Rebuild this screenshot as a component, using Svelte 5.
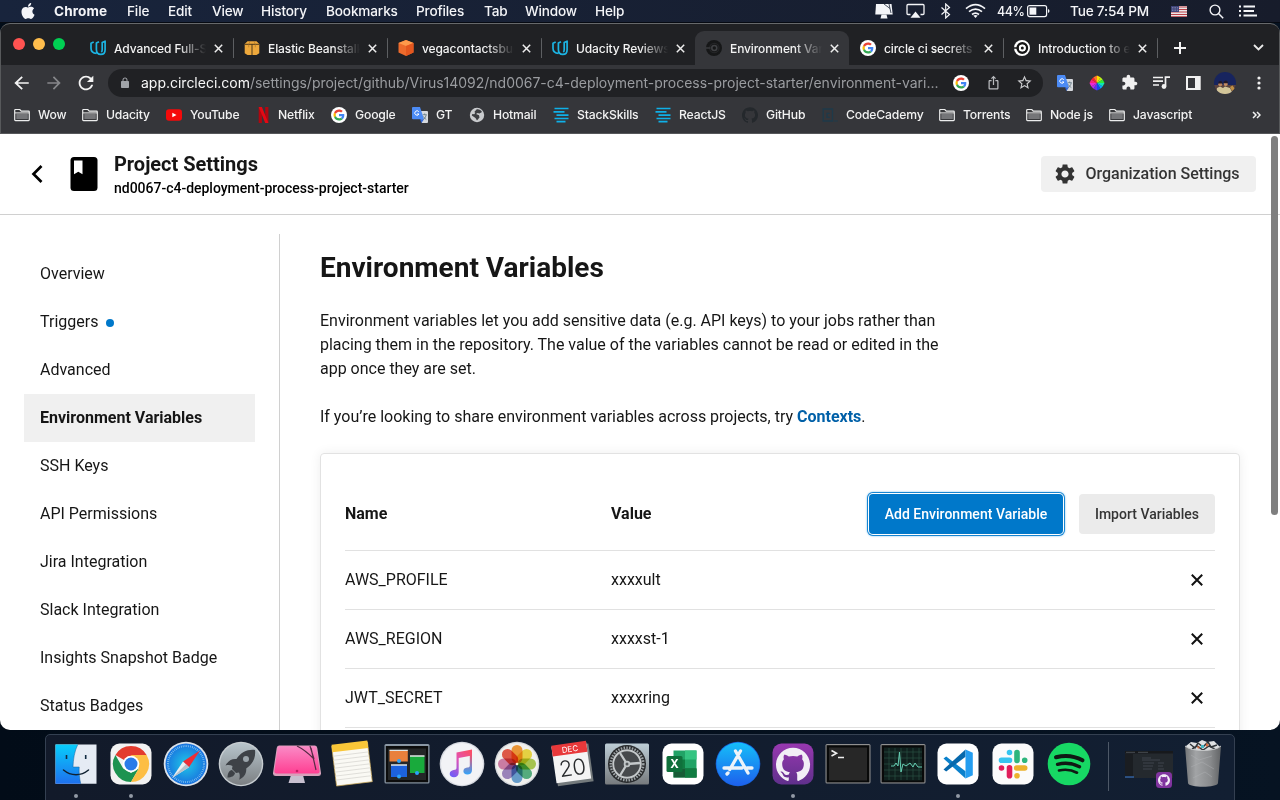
<script>
  const menus = ['File', 'Edit', 'View', 'History', 'Bookmarks', 'Profiles', 'Tab', 'Window', 'Help'];
  const tabs = [
    { icon: 'udacity', title: 'Advanced Full-Stack' },
    { icon: 'beanstalk', title: 'Elastic Beanstalk' },
    { icon: 'bucket', title: 'vegacontactsbucket' },
    { icon: 'udacity', title: 'Udacity Reviews' },
    { icon: 'circledark', title: 'Environment Variables', active: true },
    { icon: 'google', title: 'circle ci secrets' },
    { icon: 'circlelight', title: 'Introduction to env' }
  ];
  const bookmarks = [
    ['folder', 'Wow'], ['folder', 'Udacity'], ['youtube', 'YouTube'], ['netflix', 'Netflix'],
    ['google', 'Google'], ['translate', 'GT'], ['globe', 'Hotmail'], ['stack', 'StackSkills'],
    ['stack', 'ReactJS'], ['github', 'GitHub'], ['code', 'CodeCademy'], ['folder', 'Torrents'],
    ['folder', 'Node js'], ['folder', 'Javascript']
  ];
  const nav = ['Overview', 'Triggers', 'Advanced', 'Environment Variables', 'SSH Keys', 'API Permissions',
    'Jira Integration', 'Slack Integration', 'Insights Snapshot Badge', 'Status Badges'];
  const vars = [['AWS_PROFILE', 'xxxxult'], ['AWS_REGION', 'xxxxst-1'], ['JWT_SECRET', 'xxxxring']];
  const dock = ['finder', 'chrome', 'safari', 'rocket', 'cleaner', 'notes', 'mission', 'music', 'photos', 'calendar',
    'prefs', 'excel', 'appstore', 'github', 'terminal', 'activity', 'vscode', 'slack', 'spotify'];
  const running = ['finder', 'chrome', 'github', 'vscode'];
  const petals = ['#f7962a', '#f1dc38', '#a9cb45', '#4cb07c', '#5f9dd4', '#9b82c2', '#d37aa8', '#e94f3c'];
  const cat = 'M12 .297c-6.63 0-12 5.373-12 12 0 5.303 3.438 9.8 8.205 11.385.6.113.82-.258.82-.577 0-.285-.01-1.04-.015-2.04-3.338.724-4.042-1.61-4.042-1.61C4.422 18.07 3.633 17.7 3.633 17.7c-1.087-.744.084-.729.084-.729 1.205.084 1.838 1.236 1.838 1.236 1.07 1.835 2.809 1.305 3.495.998.108-.776.417-1.305.76-1.605-2.665-.3-5.466-1.332-5.466-5.93 0-1.31.465-2.38 1.235-3.22-.135-.303-.54-1.523.105-3.176 0 0 1.005-.322 3.3 1.23.96-.267 1.98-.399 3-.405 1.02.006 2.04.138 3 .405 2.28-1.552 3.285-1.23 3.285-1.23.645 1.653.24 2.873.12 3.176.765.84 1.23 1.91 1.23 3.22 0 4.61-2.805 5.625-5.475 5.92.42.36.81 1.096.81 2.22 0 1.606-.015 2.896-.015 3.286 0 .315.21.69.825.57C20.565 22.092 24 17.592 24 12.297c0-6.627-5.373-12-12-12';
</script>

{#snippet small(name)}
  <svg class="fav" viewBox="0 0 16 16" width="16" height="16">
    {#if name === 'udacity'}
      <path d="M3.700 2L1 3.300v4.900c0 3.100 2 5 5.500 5.100M9 1.700L6.400 3v6.500c0 3 1.700 4.900 4.400 4.900s4.300-1.900 4.300-4.700V1.200l-2.900 1.400v7.200c0 1-.3 1.700-.9 2.200" fill="none" stroke="#1cb4e3" stroke-width="1.700" stroke-linejoin="round" />
    {:else if name === 'beanstalk'}
      <path d="M3.500 1.300h9L15.300 4v9.300L12.500 15H8.300v-.1H7.700V15H3.500L.7 13.300V4z" fill="#eda83c" /><path d="M.9 4.300h14.200M8 4.300V15" stroke="#3b2c16" stroke-width=".9" /><path d="M6 1.300L4.700 4.300v3M10 1.300l1.300 3v3" fill="none" stroke="#a97326" stroke-width=".6" />
    {:else if name === 'bucket'}
      <path d="M8 0l7.500 3v9.500L8 16 .5 12.500V3z" fill="#ed6b2c" /><path d="M.5 3L8 0l7.500 3L8 6z" fill="#ff9a4b" /><path d="M8 6l7.500-3v9.500L8 16z" fill="#e4571f" />
    {:else if name === 'circledark' || name === 'circlelight'}
      {@const dark = name === 'circledark'}
      <circle cx="8" cy="8" r="8" fill={dark ? '#161718' : '#fff'} />
      <circle cx="8.300" cy="8" r="4.700" stroke-width={dark ? 1.300 : 2.400} fill="none" stroke={dark ? '#242527' : '#161616'} />
      <path d="M0 8h4.500" stroke={dark ? '#3a3b3e' : '#161616'} stroke-width="1.600" />
      <circle cx="8.300" cy="8" r="2.500" fill="none" stroke={dark ? '#3f4043' : '#fff'} stroke-width="1.600" />
      {#if !dark}<circle cx="8.300" cy="8" r="1.500" fill="#161616" />{/if}
    {:else if name === 'google'}
      <circle cx="8" cy="8" r="8" fill="#fff" />
      <g transform="translate(2.500 2.500) scale(.23)">
        <path fill="#ea4335" d="M24 9.500c3.540 0 6.710 1.220 9.210 3.600l6.850-6.850C35.900 2.380 30.470 0 24 0 14.620 0 6.510 5.380 2.560 13.220l7.980 6.190C12.430 13.720 17.740 9.500 24 9.500z" />
        <path fill="#4285f4" d="M46.980 24.550c0-1.570-.15-3.090-.38-4.550H24v9.020h12.940c-.58 2.960-2.260 5.480-4.780 7.180l7.730 6c4.510-4.180 7.090-10.360 7.090-17.650z" />
        <path fill="#fbbc05" d="M10.530 28.590c-.48-1.450-.76-2.990-.76-4.590s.27-3.140.76-4.590l-7.980-6.190C.92 16.460 0 20.120 0 24c0 3.880.92 7.540 2.560 10.780z" />
        <path fill="#34a853" d="M24 48c6.480 0 11.930-2.130 15.890-5.810l-7.730-6c-2.150 1.450-4.920 2.300-8.160 2.300-6.260 0-11.570-4.220-13.470-9.910l-7.980 6.190C6.510 42.620 14.620 48 24 48z" />
      </g>
    {:else if name === 'folder'}
      <path d="M.7 12.800V3.300a.8.800 0 0 1 .8-.8h4.300l1.500 1.700h7.200a.8.800 0 0 1 .8.800v7.800a.8.800 0 0 1-.8.800h-13a.8.800 0 0 1-.8-.8z" fill="#36373a" stroke="#eceded" stroke-width="1.200" />
      <path d="M2.300 6.700h11.500V12H2.300z" fill="#747578" /><path d="M1 5.900h14" stroke="#eceded" />
    {:else if name === 'youtube'}
      <rect y="2.300" width="16" height="11.400" rx="3" fill="#f50a0a" /><path d="M6.300 5.700v4.600l4.200-2.300z" fill="#fff" />
    {:else if name === 'netflix'}
      <path d="M2.700 0h3.200v16H2.700zM9.200 0h3.200v16H9.200z" fill="#b10710" /><path d="M2.700 0h3.200l6.500 16H9.200z" fill="#e50914" />
    {:else if name === 'translate'}
      <path d="M6 4h9q1 0 1 1v10q0 1-1 1h-5z" fill="#d6d9de" /><path d="M1 0h7l4 12.300H1q-1 0-1-1V1q0-1 1-1z" fill="#4c8bf5" /><path d="M8 12.300h4L9.500 16z" fill="#3266d5" />
      <path d="M6.800 4.700A2.200 2.200 0 1 0 7 7H5" fill="none" stroke="#fff" stroke-width="1" /><path d="M10.800 7.700h4M12.700 6.500v1.300M14.200 8c-.5 2-1.300 3.300-2.600 4.500M11.500 9.500c.8 1.500 1.600 2.300 2.800 3" stroke="#5f7680" stroke-width=".8" fill="none" />
    {:else if name === 'globe'}
      <circle cx="8" cy="8" r="7.200" fill="#c9cbce" /><path d="M7.500 2.500c2-.5 4.500.5 5.500 2.500l-2.500 1.500-2-.5-1.500 1 3 1.300.5 2.200-2.500 3-1.500-2.500L2.800 8.500l.5-1.500 2 .3 1-1.500-1-.8z" fill="#3c3e42" />
    {:else if name === 'stack'}
      <path d="M1.500 1.500h14M.5 4.900h11M3.500 8.200h12M1.500 11.500h14M3.500 14.600h9" stroke="#0fb0e8" stroke-width="1.700" />
    {:else if name === 'github'}
      <path d={cat} fill="#24282c" transform="scale(.667)" />
    {:else if name === 'code'}
      <path d="M1.200 2h9.300v12H1.200z" fill="none" stroke="#1e3a4a" stroke-width="1.300" /><path d="M7.700 6.300H5v4h2.700M11.800 14h4" fill="none" stroke="#1e3a4a" stroke-width="1.200" />
    {/if}
  </svg>
{/snippet}

{#snippet app(name)}
  <svg class="app" viewBox="0 0 48 48" width="48" height="48">
    {#if name === 'finder'}
      <defs><linearGradient id="fi" x2="0" y2="1"><stop stop-color="#08cdfb" /><stop offset="1" stop-color="#1e70ee" /></linearGradient></defs>
      <path d="M3.500 4.500h41v39.300h-41z" fill="#e5ebf4" /><path d="M3.500 4.500h22.300c-3.500 7-4.500 15-4.800 22.500h6.200c-.3 5.600.3 11 1.500 16.800H3.500z" fill="url(#fi)" />
      <path d="M14.500 15v4M33.700 15v4" stroke="#112a42" stroke-width="1.600" /><path d="M11.500 30c7.500 6.300 17.500 6.300 25 0" stroke="#102131" stroke-width="1.500" fill="none" stroke-linecap="round" /><path d="M25.800 4.500c-3.500 7-4.500 15-4.800 22.500h6.200c-.3 5.600.3 11 1.500 16.800" stroke="#17629b" fill="none" stroke-width=".5" />
    {:else if name === 'chrome'}
      <rect x="3.500" y="3.500" width="41" height="41" rx="9" fill="#f2f2f2" />
      <path d="M24 24L8.400 15A18 18 0 0 1 39.600 15z" fill="#e33b2e" /><path d="M24 42A18 18 0 0 1 8.400 15l7.800 13.500L24 33l7.800-4.500z" fill="#1d9350" />
      <path d="M24 42l7.800-13.500L24 15h15.600A18 18 0 0 1 24 42z" fill="#fdbe44" />
      <circle cx="24" cy="24" r="8.300" fill="#fff" /><circle cx="24" cy="24" r="6.500" fill="#2a7be9" />
    {:else if name === 'safari'}
      <defs><radialGradient id="sf"><stop stop-color="#20c8e7" /><stop offset="1" stop-color="#1973df" /></radialGradient></defs>
      <circle cx="24" cy="24" r="22.300" fill="#dce2e8" /><circle cx="24" cy="24" r="20.500" fill="url(#sf)" /><circle cx="24" cy="24" r="18" fill="none" stroke="#9fd5f5" stroke-width="2" stroke-dasharray=".6 1.285" />
      <path d="M38 10.500L21 21.500l6 5.700z" fill="#ee2d36" /><path d="M10 38l11-16.500 6 5.700z" fill="#eceff2" /><path d="M10 38l17-10.800-3-3z" fill="#b9c2cb" />
    {:else if name === 'rocket'}
      <defs><linearGradient id="rk" x2="0" y2="1"><stop stop-color="#b8c5cc" /><stop offset="1" stop-color="#7c8083" /></linearGradient></defs>
      <circle cx="24" cy="24" r="22.300" fill="#c6ccd0" /><circle cx="24" cy="24" r="20.900" fill="url(#rk)" />
      <path d="M38 10c-7-1-14 2-18.500 9-5-.5-8.500 2-11 6.500 3-.7 5-.5 7 .5l-.5 3 4 4 3-.5c1 2 1 4.500.2 7.200 5-2.500 7.500-6.200 7-11.200C36 24 39 17 38 10z" fill="#3e4247" /><path d="M15 30c-3 .5-4.500 3.500-4.500 7.500 4 0 7-1.500 7.500-4.500z" fill="#3e4247" /><circle cx="29" cy="19" r="3" fill="#9ba4aa" />
    {:else if name === 'cleaner'}
      <defs><linearGradient id="cl" x2="0" y2="1"><stop stop-color="#fa8ac6" /><stop offset="1" stop-color="#ff3f92" /></linearGradient></defs>
      <path d="M18 35h12l2 8H15.500z" fill="#c8c0cf" /><path d="M6 5.500h36q2 0 2.300 2.500l3.700 25q.2 3-2.700 3H2.700q-2.900 0-2.700-3L3.700 8Q4 5.500 6 5.500z" fill="#d7a0ba" /><path d="M6.500 6.300h35q1.600 0 1.900 1.900l3.200 22.800q.2 2.500-2 2.500H3.400q-2.200 0-2-2.500L4.600 8.200q.3-1.900 1.900-1.900z" fill="url(#cl)" /><path d="M24 6c6 3 11 7 16 12M38 8l5 22M37 6l4 13" stroke="#562b45" stroke-width="1.200" fill="none" /><circle cx="24" cy="31" r="1.300" fill="#c21f65" />
    {:else if name === 'notes'}
      <g transform="rotate(-7 24 24)"><path d="M6 4h36v40H6z" fill="#faf9f4" stroke="#c9a552" stroke-width=".7" /><path d="M6 2.500h36V10H6z" fill="#f9c638" /><path d="M6 14h36M6 18h36M6 22h36M6 26h36M6 30h36M6 34h36M6 38h36" stroke="#dad9d4" stroke-width=".8" /></g>
    {:else if name === 'mission'}
      <rect x="1.500" y="4" width="45" height="39.500" rx="1.500" fill="#8a97a4" /><rect x="2.800" y="6" width="42.400" height="36.300" fill="#0c0c0c" /><path d="M5 8.500h38V40H5z" fill="#242627" />
      <path d="M6.500 10.500h18.300v11H6.500z" fill="#e9803c" /><path d="M8 25h16v12H8z" fill="#1d62dd" /><path d="M27 16h14.500v17H27z" fill="#19aa3c" /><path d="M6.500 10.300h18.300M8 25h16M27 16h14.500" stroke="#e0e5e4" stroke-width="1.300" /><circle cx="16" cy="21" r="2" fill="#2ba3fb" /><circle cx="34" cy="33" r="2" fill="#2ba3fb" /><circle cx="16" cy="36.500" r="2" fill="#2ba3fb" />
    {:else if name === 'music'}
      <defs><linearGradient id="mu" x1=".8" x2=".2" y2="1"><stop stop-color="#fb4d68" /><stop offset=".45" stop-color="#e052b5" /><stop offset="1" stop-color="#735cf5" /></linearGradient><linearGradient id="mv" x2="0" y2="1"><stop stop-color="#fb4d68" /><stop offset="1" stop-color="#30a5fb" /></linearGradient></defs>
      <circle cx="24" cy="24" r="22.300" fill="#d5d8df" /><circle cx="24" cy="24" r="21" fill="#f2f3f6" />
      <path d="M18.500 12.500L34 9.500v6L20.700 18v14.500c0 3-2 4.700-4.700 4.700s-4.300-1.400-4.300-3.300c0-2.300 1.800-3.600 4-3.900 2-.2 2.800-.5 2.800-2.500z" fill="url(#mu)" /><path d="M31.800 14H34v16c0 3-2 4.600-4.600 4.600s-4-1.400-4-3.300c0-2.300 1.600-3.400 3.700-3.700 1.900-.2 2.700-.6 2.700-2.200z" fill="url(#mv)" />
    {:else if name === 'photos'}
      <circle cx="24" cy="24" r="22.300" fill="#d3d6da" /><circle cx="24" cy="24" r="21" fill="#f1f0ed" />
      {#each petals as p, i}<rect class="petal" x="18.500" y="5" width="11" height="18.500" rx="5.500" fill={p} transform={`rotate(${i * 45} 24 24)`} />{/each}
      <circle cx="24" cy="24" r="1.300" fill="#fff4d0" />
    {:else if name === 'calendar'}
      <g transform="rotate(-8 24 24)"><path d="M7 6h36v38H7z" fill="#747a7c" /><path d="M6 4h35v37H6z" fill="#f4f4f4" /><path d="M6 3h35v11H6z" fill="#e8383a" /><text x="24" y="11.700" text-anchor="middle" font-size="8" fill="#fff" font-family="Inter, sans-serif">DEC</text><text x="24" y="35.500" text-anchor="middle" font-size="22" font-weight="300" fill="#292b2d" font-family="Inter, sans-serif">20</text></g>
    {:else if name === 'prefs'}
      <defs><linearGradient id="pr" x2="0" y2="1"><stop stop-color="#bdcdd6" /><stop offset="1" stop-color="#777b7e" /></linearGradient></defs>
      <rect x="2" y="3.500" width="44" height="41" rx="1.500" fill="url(#pr)" /><circle cx="24" cy="24" r="19" fill="#292b2d" /><circle cx="24" cy="24" r="16.300" fill="none" stroke="#9da3a6" stroke-width="2.500" stroke-dasharray="1.500 1.300" /><circle cx="24" cy="24" r="13.800" fill="#46494c" stroke="#c4c8ca" stroke-width="1.900" /><path d="M24 24l13-1M24 24l-7-11M24 24l-7 11.500" stroke="#c4c8ca" stroke-width="2.300" /><circle cx="24" cy="24" r="3.300" fill="#bfc4c6" /><circle cx="24" cy="24" r="1.500" fill="#54585b" />
    {:else if name === 'excel'}
      <rect x="3.500" y="3.500" width="41" height="41" rx="9" fill="#fff" /><path d="M14.500 10.500h23v27h-23z" fill="#21a366" /><path d="M26 10.500h11.500v9H26z" fill="#35c481" /><path d="M14.500 19.500H26v9H14.500z" fill="#107c41" /><path d="M14.500 28.500h23v9h-23z" fill="#185c37" /><path d="M26 28.500h11.500v9H26z" fill="#107c41" /><rect x="7.500" y="16" width="16" height="16" rx="1.500" fill="#0f703b" /><text x="15.500" y="28.200" text-anchor="middle" font-size="11.500" font-weight="700" fill="#fff" font-family="Inter, sans-serif">X</text>
    {:else if name === 'appstore'}
      <defs><linearGradient id="as" x2="0" y2="1"><stop stop-color="#15bff9" /><stop offset="1" stop-color="#1d60ed" /></linearGradient></defs>
      <circle cx="24" cy="24" r="22.300" fill="#1763dd" /><circle cx="24" cy="24" r="21.500" fill="url(#as)" /><g stroke="#edf3f9" stroke-width="3.300" stroke-linecap="round"><path d="M21.500 11l12.500 22M26.500 11L15.800 29.500M10 28h18M33 28h5M14 33l-1 1" /></g>
    {:else if name === 'github'}
      <defs><linearGradient id="gh" x2="0" y2="1"><stop stop-color="#9838b0" /><stop offset="1" stop-color="#60308c" /></linearGradient></defs>
      <rect x="3.500" y="3.500" width="41" height="41" rx="9" fill="url(#gh)" /><path d={cat} fill="#f2eef6" transform="translate(7 7.300) scale(1.420)" />
    {:else if name === 'terminal' || name === 'activity'}
      <rect x="1.500" y="4" width="45" height="39.500" rx="1.500" fill="#909090" /><rect x="2.600" y="5.200" width="42.800" height="37.200" fill="#080909" />
      {#if name === 'terminal'}<path d="M5 7.500h38v33H5z" fill="#272727" /><path d="M7.500 10.500l5 2.800-5 2.700M14 17.500h6" stroke="#eee" stroke-width="1.600" fill="none" />
      {:else}<path d="M5 7.500h38v33H5z" fill="#10201e" /><path d="M10 8v32M16 8v32M22 8v32M28 8v32M34 8v32M40 8v32M5 12h38M5 18h38M5 24h38M5 30h38M5 36h38" stroke="#285044" stroke-width=".7" /><path d="M12 26h3l2-3 2 3 1.500-14 1.500 20 2-8 3 2 4-3 3 4 2-4 3 4h4" fill="none" stroke="#65ceb3" stroke-width="1" />{/if}
    {:else if name === 'vscode'}
      <rect x="3.500" y="3.500" width="41" height="41" rx="9" fill="#fff" /><path d="M9.500 18.500l2.700-2 19.300 14.800v7.200z" fill="#0b81cc" /><path d="M9.500 29.500l2.700 2 19.300-14.800V9.500z" fill="#0668ac" /><path d="M31.500 9.500l7.300 3.300v22.400l-7.300 3.300z" fill="#249df0" />
    {:else if name === 'slack'}
      <rect x="3.500" y="3.500" width="41" height="41" rx="9" fill="#fbfbfb" /><g stroke-width="5.600" stroke-linecap="round"><path d="M20.500 12.500v0M12.500 20.300h8" stroke="#36c5f0" /><path d="M28 12.500v8M35.700 20.300v0" stroke="#2eb67d" /><path d="M35.700 28h-8M28 35.700v0" stroke="#ecb22e" /><path d="M20.500 35.700v-8M12.500 28v0" stroke="#e01e5a" /></g>
    {:else if name === 'spotify'}
      <circle cx="24" cy="24" r="21.300" fill="#17d864" /><g fill="none" stroke="#101914" stroke-linecap="round"><path d="M11 17.300c9-2.500 18-1.700 26.500 3" stroke-width="4" /><path d="M12.500 24.300c8-2 15-1.200 22 2.500" stroke-width="3.300" /><path d="M14 30.500c6.500-1.500 12.500-.8 18 2.200" stroke-width="2.700" /></g>
    {/if}
  </svg>
{/snippet}

<div class="desktop">
  <header class="menubar">
    <svg class="apple" width="16" height="16" viewBox="0 0 24 24"><path fill="#f4f5f8" d="M12.152 6.896c-.948 0-2.415-1.078-3.960-1.040-2.040.027-3.910 1.183-4.961 3.014-2.117 3.675-.546 9.103 1.519 12.090 1.013 1.454 2.208 3.090 3.792 3.039 1.520-.065 2.090-.987 3.935-.987 1.831 0 2.350.987 3.960.948 1.637-.026 2.676-1.480 3.676-2.948 1.156-1.688 1.636-3.325 1.662-3.415-.039-.013-3.182-1.221-3.220-4.857-.026-3.040 2.480-4.494 2.597-4.559-1.429-2.090-3.623-2.324-4.390-2.376-2-.156-3.675 1.090-4.610 1.090zM15.530 3.830c.843-1.012 1.400-2.427 1.245-3.830-1.207.052-2.662.805-3.532 1.818-.78.896-1.454 2.338-1.273 3.714 1.338.104 2.715-.688 3.559-1.701" /></svg>
    <b>Chrome</b>
    {#each menus as m}<span>{m}</span>{/each}
    <div class="status">
      <svg width="18" height="16" viewBox="0 0 18 16"><path d="M1 1h15.500l1.200 10.500H.3z" fill="#f4f5f8" /><path d="M6.500 11.500h5l1 4h-7z" fill="#f4f5f8" /><path d="M9 1l6 4.500M14 1l2 9" stroke="#1b2436" stroke-width=".8" /></svg>
      <svg width="19" height="16" viewBox="0 0 19 16"><path d="M4.500 11.500H2q-1 0-1-1v-8q0-1 1-1h15q1 0 1 1v8q0 1-1 1h-2.500" fill="none" stroke="#f4f5f8" stroke-width="1.300" /><path d="M9.500 8.500l5 6.200h-10z" fill="#f4f5f8" /></svg>
      <svg width="12" height="16" viewBox="0 0 12 16"><path d="M1.500 4.500l8 7L5.700 15V1l3.800 3.500-8 7" fill="none" stroke="#f4f5f8" stroke-width="1.200" /></svg>
      <svg width="21" height="16" viewBox="0 0 21 16"><g fill="none" stroke="#f4f5f8" stroke-width="1.700"><path d="M1 5.600q9.500-8 19 0M4 8.700q6.500-5.300 13 0M7 11.500q3.500-2.700 7 0" /></g><path d="M8.300 12.600q2.200-1.400 4.400 0l-2.200 2.400z" fill="#f4f5f8" /></svg>
      <span class="pct">44%</span>
      <svg width="23" height="14" viewBox="0 0 23 14"><rect x=".6" y="1.600" width="19" height="11" rx="2" fill="none" stroke="#f4f5f8" stroke-width="1.200" /><path d="M2.500 3.500h6.800v7.200H2.500z" fill="#f4f5f8" /><path d="M21 5v4q1.500-.5 1.500-2T21 5" fill="#f4f5f8" /></svg>
      <span class="clock">Tue 7:54 PM</span>
      <svg class="flag" width="16" height="11" viewBox="0 0 16 11"><path d="M0 0h16v11H0z" fill="#ece7e8" /><path d="M0 1h16M0 3.500h16M0 6h16M0 8.500h16M0 10.700h16" stroke="#ba4149" /><path d="M0 0h8v6H0z" fill="#3e4379" /><path d="M1 1.500h6M1 3h6M1 4.500h6" stroke="#c6c8dc" stroke-width=".6" stroke-dasharray=".7 1" /></svg>
      <svg width="15" height="15" viewBox="0 0 15 15"><circle cx="6" cy="6" r="4.900" fill="none" stroke="#f4f5f8" stroke-width="1.400" /><path d="M9.500 9.500l4.700 4.700" stroke="#f4f5f8" stroke-width="1.500" /></svg>
      <svg width="18" height="12" viewBox="0 0 18 12"><path d="M0 1.500h2M4.500 1.500H16M0 6h2M4.500 6H15M0 10.500h2M4.500 10.500H18" stroke="#f4f5f8" stroke-width="1.800" /></svg>
    </div>
  </header>

  <main class="window">
    <div class="tabstrip">
      <div class="lights"><i></i><i></i><i></i></div>
      {#each tabs as t, i}
        <div class="tab" class:active={t.active} class:sep={i !== 3 && i !== 4}>
          {@render small(t.icon)}<span>{t.title}</span>
          <svg width="9" height="9" viewBox="0 0 9 9"><path d="M.8.8l7.400 7.400M8.200.8L.8 8.200" stroke="#eee" stroke-width="1.500" /></svg>
        </div>
      {/each}
      <svg class="plus" width="12" height="12" viewBox="0 0 12 12"><path d="M6 0v12M0 6h12" stroke="#f3f3f3" stroke-width="2" /></svg>
      <svg class="chev" width="11" height="7" viewBox="0 0 11 7"><path d="M1 1l4.500 4.500L10 1" fill="none" stroke="#eaeaea" stroke-width="1.800" /></svg>
    </div>

    <div class="toolbar">
      <svg width="20" height="20" viewBox="0 0 24 24"><path fill="#f3f3f3" d="M20 11H7.830l5.590-5.590L12 4l-8 8 8 8 1.410-1.410L7.830 13H20z" transform="translate(-1.500 0) scale(1.080 1) " /></svg>
      <svg width="20" height="20" viewBox="0 0 24 24"><path fill="#86878a" d="M4 11h12.170l-5.590-5.590L12 4l8 8-8 8-1.410-1.410L16.170 13H4z" /></svg>
      <svg width="22" height="22" viewBox="0 0 24 24"><path fill="#f3f3f3" d="M17.650 6.350C16.200 4.900 14.210 4 12 4c-4.420 0-7.990 3.580-7.990 8s3.570 8 7.990 8c3.730 0 6.840-2.550 7.730-6h-2.080c-.82 2.330-3.040 4-5.650 4-3.310 0-6-2.690-6-6s2.690-6 6-6c1.660 0 3.140.69 4.220 1.780L13 11h7V4z" /></svg>
      <div class="omni">
        <svg width="12" height="12" viewBox="0 0 24 24"><path fill="#a0a3a8" d="M18 8h-1V6c0-2.760-2.240-5-5-5S7 3.240 7 6v2H6c-1.100 0-2 .9-2 2v10c0 1.100.9 2 2 2h12c1.100 0 2-.9 2-2V10c0-1.100-.9-2-2-2zM9 8V6c0-1.660 1.340-3 3-3s3 1.340 3 3v2z" /></svg>
        <p><b>app.circleci.com</b>/settings/project/github/Virus14092/nd0067-c4-deployment-process-project-starter/environment-vari...</p>
        {@render small('google')}
        <svg width="15" height="15" viewBox="0 0 24 24"><path fill="#b9bbbe" d="M16 5l-1.420 1.420-1.590-1.590V16h-1.980V4.830L9.420 6.420 8 5l4-4 4 4zm4 5v11c0 1.100-.9 2-2 2H6c-1.110 0-2-.9-2-2V10c0-1.110.89-2 2-2h3v2H6v11h12V10h-3V8h3c1.100 0 2 .89 2 2z" /></svg>
        <svg width="17" height="17" viewBox="0 0 24 24"><path fill="#c9cacc" d="M22 9.240l-7.190-.62L12 2 9.190 8.630 2 9.240l5.460 4.730L5.820 21 12 17.270 18.180 21l-1.630-7.030zM12 15.400l-3.760 2.270 1-4.280-3.320-2.880 4.380-.38L12 6.100l1.710 4.040 4.380.38-3.320 2.880 1 4.280z" /></svg>
      </div>
      <div class="exts">
        {@render small('translate')}
        <svg width="16" height="16" viewBox="0 0 16 16"><path d="M8 8V.5l3.500 1.800z" fill="#fddf00" /><path d="M8 8l3.500-5.700 2.200 2.200z" fill="#b6f61b" /><path d="M8 8l5.700-3.500L15.500 8z" fill="#2deb3c" /><path d="M8 8h7.500l-1.800 3.500z" fill="#10e4b9" /><path d="M8 8l5.700 3.500-2.200 2.200z" fill="#08a6f5" /><path d="M8 8l3.500 5.700L8 15.500z" fill="#1748ec" /><path d="M8 8v7.500l-3.500-1.800z" fill="#6431ee" /><path d="M8 8l-3.500 5.700-2.200-2.200z" fill="#b22eec" /><path d="M8 8l-5.700 3.500L.5 8z" fill="#ee28d4" /><path d="M8 8H.5l1.800-3.500z" fill="#fa247e" /><path d="M8 8L2.300 4.500l2.200-2.200z" fill="#fc2131" /><path d="M8 8L4.500 2.300 8 .5z" fill="#fb762b" /></svg>
        <svg width="17" height="17" viewBox="0 0 24 24"><path fill="#f1f1f1" d="M20.500 11H19V7c0-1.100-.9-2-2-2h-4V3.500C13 2.120 11.880 1 10.500 1S8 2.120 8 3.500V5H4c-1.100 0-1.990.9-1.990 2v3.800H3.500c1.490 0 2.700 1.210 2.700 2.700s-1.210 2.700-2.700 2.700H2V20c0 1.100.9 2 2 2h3.800v-1.500c0-1.490 1.210-2.700 2.700-2.700s2.700 1.210 2.700 2.700V22H17c1.100 0 2-.9 2-2v-4h1.500c1.380 0 2.500-1.120 2.500-2.500S21.880 11 20.500 11z" /></svg>
        <svg width="17" height="15" viewBox="0 0 17 15"><path d="M0 2.500h10M0 6.200h10M0 10h6M12.500 11V2.200H17" fill="none" stroke="#f1f1f1" stroke-width="1.700" /><circle cx="11" cy="11.500" r="2.400" fill="#f1f1f1" /></svg>
        <svg width="15" height="14" viewBox="0 0 15 14"><path d="M1 1h12.700v12H1z" fill="none" stroke="#f1f1f1" stroke-width="2" /><path d="M9 1h5v12H9z" fill="#f1f1f1" /></svg>
        <svg width="22" height="22" viewBox="0 0 22 22"><defs><clipPath id="av"><circle cx="11" cy="11" r="11" /></clipPath></defs><g clip-path="url(#av)"><path d="M0 0h22v22H0z" fill="#17245e" /><path d="M0 13h22v9H0z" fill="#59423d" /><path d="M2 22l1-6 3-1.500 3 1.500 2-1.500 5 1.500 3 6z" fill="#d2c599" /><circle cx="6.300" cy="12.300" r="2" fill="#b8825d" /><circle cx="11.700" cy="12" r="2.100" fill="#c58c65" /><path d="M4.200 11.500c0-3.300 4.300-3.300 4.300 0M9.500 11.200c0-3.500 4.500-3.500 4.500 0" fill="#211827" /><path d="M16 15l2.500-1.500L21 17l-3 2z" fill="#c19044" /></g></svg>
        <svg width="4" height="14" viewBox="0 0 4 14"><g fill="#f1f1f1"><circle cx="2" cy="2" r="1.600" /><circle cx="2" cy="7" r="1.600" /><circle cx="2" cy="12" r="1.600" /></g></svg>
      </div>
    </div>

    <div class="bookmarks">
      {#each bookmarks as [icon, label]}<div>{@render small(icon)}<span>{label}</span></div>{/each}
      <svg width="9" height="8" viewBox="0 0 9 8"><path d="M1 1l3 3-3 3M5 1l3 3-3 3" fill="none" stroke="#f1f1f1" stroke-width="1.500" /></svg>
    </div>

    <div class="page">
      <header class="phead">
        <svg width="12" height="20" viewBox="0 0 12 20"><path d="M10.500 2L2.500 10l8 8" fill="none" stroke="#000" stroke-width="2.700" /></svg>
        <svg class="book" width="28" height="34" viewBox="0 0 28 34"><rect x=".5" width="27" height="34" rx="3.500" fill="#000" /><path d="M4 3.500h8.500v13.700l-4.200-2.500L4 17.200z" fill="#fff" /></svg>
        <div class="titles"><h2>Project Settings</h2><p>nd0067-c4-deployment-process-project-starter</p></div>
        <button class="org"><svg width="24" height="24" viewBox="0 0 24 24"><path fill="#333" d="M19.140 12.940c.04-.3.060-.61.060-.94 0-.32-.02-.64-.07-.94l2.030-1.580c.18-.14.230-.41.120-.61l-1.920-3.320c-.12-.22-.37-.29-.59-.22l-2.390.96c-.5-.38-1.030-.7-1.620-.94l-.36-2.540c-.04-.24-.24-.41-.48-.41h-3.840c-.24 0-.43.170-.47.410l-.36 2.540c-.59.240-1.130.570-1.620.940l-2.390-.96c-.22-.08-.47 0-.59.220L2.740 8.870c-.12.210-.08.470.120.610l2.030 1.580c-.05.300-.09.630-.09.940s.02.640.07.940l-2.030 1.580c-.18.140-.23.410-.12.610l1.920 3.320c.12.220.370.290.590.220l2.390-.96c.5.380 1.030.700 1.620.940l.36 2.540c.05.240.240.410.480.410h3.840c.24 0 .440-.17.470-.41l.36-2.540c.59-.24 1.130-.56 1.620-.94l2.390.96c.22.080.470 0 .590-.22l1.920-3.320c.12-.22.070-.47-.12-.61zM12 15.600c-1.980 0-3.600-1.620-3.600-3.600s1.620-3.600 3.600-3.600 3.600 1.620 3.600 3.600-1.620 3.600-3.600 3.600z" /></svg><span>Organization Settings</span></button>
      </header>
      <div class="cols">
        <nav>
          {#each nav as n, i}<div class:sel={i === 3}><span>{n}</span>{#if i === 1}<i></i>{/if}</div>{/each}
        </nav>
        <section>
          <h1>Environment Variables</h1>
          <p>Environment variables let you add sensitive data (e.g. API keys) to your jobs rather than<br />placing them in the repository. The value of the variables cannot be read or edited in the<br />app once they are set.</p>
          <p class="share">If you’re looking to share environment variables across projects, try <a href="#contexts">Contexts</a>.</p>
          <div class="card">
            <div class="row head"><b>Name</b><b>Value</b><div class="actions"><button class="add">Add Environment Variable</button><button class="imp">Import Variables</button></div></div>
            {#each vars as [k, v]}
              <div class="row"><span>{k}</span><span>{v}</span><svg width="12" height="12" viewBox="0 0 12 12"><path d="M.8.8l10.400 10.400M11.200.8L.8 11.200" stroke="#111" stroke-width="2" /></svg></div>
            {/each}
          </div>
        </section>
      </div>
      <div class="scroll"></div>
    </div>
  </main>

  <footer class="dock">
    {#each dock as d}<div class="slot">{@render app(d)}{#if running.includes(d)}<i></i>{/if}</div>{/each}
    <span class="line"></span>
    <svg class="thumb" width="48" height="37" viewBox="0 0 48 37"><path d="M0 0h48v27H0z" fill="#24292e" /><path d="M0 0h48v2.500H0z" fill="#17191c" /><path d="M1 1.300h9M13 1.300h10" stroke="#697078" stroke-width=".6" /><path d="M0 3h8v23H0z" fill="#1a1d21" /><path d="M17 7h9M17 9h18M18 12h11M33 12h6M18 15h10M33 15h5M18 18h9M33 18h6" stroke="#6b7279" stroke-width=".4" /><path d="M0 26h9" stroke="#356ebc" stroke-width="1.200" /><rect x="31" y="21" width="16" height="16" rx="3.500" fill="#80349f" /><path d={cat} fill="#f3edf8" transform="translate(33 23) scale(.5)" /></svg>
    <svg class="trash" width="38" height="48" viewBox="0 0 38 48">
      <defs><linearGradient id="tr"><stop stop-color="#737577" /><stop offset=".3" stop-color="#a2a4a6" /><stop offset=".7" stop-color="#898b8d" /><stop offset="1" stop-color="#626466" /></linearGradient></defs>
      <path d="M2 6l5-4 6 1 5-3 5 2 7-1 6 6-2 6H4z" fill="#dfe1e3" /><path d="M6 4l5 4 3-5 5 4 5-5 3 5 6-2M8 9l5-3 6 4 6-4 6 3" stroke="#303539" stroke-width="1.500" fill="none" /><path d="M13 6l3 1-2 2zM22 3l3 2-3 2z" fill="#d76637" /><path d="M17 5h3v3h-3z" fill="#41b5c1" /><path d="M1 6c6 6 30 6 36 0l-3 37c-.5 5-29.500 5-30 0z" fill="url(#tr)" /><path d="M1 6c6 6 30 6 36 0" fill="none" stroke="#c4c6c7" /><path d="M7 15l8 5 13-4M7 27l11-5 12 7M9 38l12-6 7 5" stroke="#b5b7b8" stroke-width="1" fill="none" opacity=".4" />
    </svg>
  </footer>
</div>

<style>
  :global(body) { background: #04101c; overflow: hidden; }
  * { box-sizing: border-box; }
  svg { display: block; flex: none; }
  h1, h2, p { margin: 0; }
  button { border: 0; font: inherit; padding: 0; }
  .desktop { width: 1280px; height: 800px; display: flex; flex-direction: column; background: linear-gradient(90deg, #020c18, #061322); overflow: hidden; font-family: Inter, 'Liberation Sans', sans-serif; }
  .petal { mix-blend-mode: multiply; opacity: .92; }
  .menubar { height: 23px; flex: none; display: grid; grid-template-columns: 34px 73px 41px 44px 49px 65px 90px 68px 41px 70px 60px 1fr; align-items: center; padding-left: 20px; background: linear-gradient(90deg, #18243c, #171c2b); color: #f4f5f8; font-size: 13.600px; font-weight: 500; white-space: nowrap; border-bottom: 1px solid #060a12; letter-spacing: -.15px; }
  .menubar b { font-weight: 700; letter-spacing: .1px; }
  .apple { margin-top: -1px; }
  .status { display: grid; align-items: center; grid-template-columns: 31px 34px 25px 32px 30px 44px 100px 38px 30px 18px; padding-left: 220px; }
  .pct { font-size: 12.500px; letter-spacing: -.4px; font-weight: 500; }
  .clock { letter-spacing: -.2px; margin-left: -1px; }
  .window { height: 707px; flex: none; display: flex; flex-direction: column; border-top: 1px solid #67696b; border-radius: 10px; overflow: hidden; background: #202124; }
  .tabstrip, .toolbar, .bookmarks { border: solid #57595b; border-width: 0 1px; }
  .tabstrip { height: 41px; flex: none; display: flex; align-items: flex-end; }
  .lights { width: 79px; flex: none; display: flex; gap: 8px; padding: 0 0 15px 12px; }
  .lights i { width: 12px; height: 12px; border-radius: 50%; background: #ff5351; }
  .lights i:nth-child(2) { background: #ffbd4c; }
  .lights i:nth-child(3) { background: #00d053; }
  .tab { width: 154px; height: 34px; flex: none; display: grid; grid-template-columns: 16px 92px 9px; column-gap: 8px; align-items: center; padding-left: 10px; font-size: 12px; color: #f3f3f3; border-radius: 9px 9px 0 0; background: linear-gradient(#5d5f62, #5d5f62) right 7px / 1px 20px no-repeat; letter-spacing: -.1px; font-weight: 500; }
  .tab:not(.sep) { background: none; }
  .tab.active { background: #35363a; margin: 0 1px 0 -1px; padding-left: 11px; }
  .tab span { overflow: hidden; white-space: nowrap; -webkit-mask-image: linear-gradient(90deg, #000 70%, transparent 100%); mask-image: linear-gradient(90deg, #000 70%, transparent 100%); }
  .plus { margin: 0 0 11px 16px; }
  .chev { margin: 0 15px 14px auto; }
  .toolbar { height: 36px; flex: none; display: grid; grid-template-columns: 32px 31px 32px 936px 1fr; align-items: center; padding: 0 0 1px 11px; background: #35363a; }
  .omni { height: 28px; margin-left: 1px; border-radius: 14px; background: #202124; display: flex; align-items: center; padding-left: 11px; }
  .omni p { width: 799px; margin-left: 10px; margin-right: 13px; color: #9a9ca0; font-size: 14px; white-space: nowrap; letter-spacing: -.012px; }
  .omni b { font-weight: 400; color: #f7f7f7; }
  .omni .fav + svg { margin: 0 15px 0 17px; }
  .exts { display: grid; grid-template-columns: 32px 32px 32px 33px 28px 43px 6px; align-items: center; padding-left: 14px; }
  .bookmarks { height: 33px; flex: none; display: grid; grid-template-columns: 68px 84px 90px 75px 81px 57px 84px 102px 87px 80px 117px 87px 83px 143px 10px; padding: 0 0 5px 13px; align-items: center; background: #35363a; border-bottom: 1px solid #56575a; font-size: 12.200px; color: #f2f2f2; font-weight: 500; letter-spacing: -.17px; }
  .bookmarks div { display: flex; align-items: center; gap: 8px; white-space: nowrap; }
  .bookmarks div:nth-child(4) span { margin-left: -2px; }
  .page { flex: 1; position: relative; min-height: 0; background: #fff; color: #161616; font-family: Roboto, 'Liberation Sans', sans-serif; overflow: hidden; }
  .phead { height: 81px; border-bottom: 1px solid #d0d0d0; display: flex; align-items: center; padding-left: 31px; padding-right: 24px; }
  .book { margin-left: 27px; }
  .titles { margin-left: 16px; padding-top: 4px; }
  .titles h2 { font-size: 20px; line-height: 24px; font-weight: 700; letter-spacing: -.02px; }
  .titles p { font-size: 14px; line-height: 24px; font-weight: 500; color: #000; letter-spacing: -.015px; }
  .org { margin-left: auto; width: 215px; height: 36px; border-radius: 4px; background: #f0f0f0; color: #343434; font-size: 16px; font-weight: 500; display: flex; align-items: center; padding-left: 12px; gap: 9px; white-space: nowrap; letter-spacing: -.02px; }
  .org span { padding-bottom: 1px; margin-left: -.5px; }
  .cols { display: flex; padding-top: 19px; }
  nav { width: 280px; height: 520px; flex: none; border-right: 1px solid #d0d0d0; padding: 16px 24px 0; }
  nav div { height: 48px; padding: 0 0 2px 16px; display: flex; align-items: center; font-size: 16px; }
  nav .sel { background: #f0f0f0; font-weight: 700; }
  nav i { width: 8px; height: 8px; border-radius: 50%; background: #0078ca; margin: 4px 0 0 8px; }
  section { width: 920px; margin-left: 40px; padding-top: 16px; font-size: 16px; line-height: 24px; }
  section > p { letter-spacing: -.006px; }
  h1 { font-size: 28px; line-height: 36px; font-weight: 700; margin-bottom: 23px; }
  .share { margin-top: 24px; }
  a { color: #0060a8; font-weight: 700; text-decoration: none; }
  .card { margin-top: 24px; height: 320px; border: 1px solid #e2e2e2; border-radius: 4px; box-shadow: 0 0 12px rgba(0, 0, 0, .07); padding: 22px 24px 0; }
  .row { height: 59px; border-bottom: 1px solid #e1e1e1; display: grid; grid-template-columns: 266px 1fr auto; align-items: center; }
  .row > svg { justify-self: end; margin-right: 12px; }
  .head { height: 75px; padding-top: 2px; }
  .actions { display: flex; justify-content: flex-end; gap: 16px; }
  .actions button { height: 40px; border-radius: 4px; font-size: 14px; font-weight: 500; letter-spacing: .02px; white-space: nowrap; }
  .add { width: 194px; flex: none; background: #0078ca; color: #fff; box-shadow: 0 0 0 1px #fff, 0 0 0 2px #1685d2, 0 0 2px 2px #6ab5e9; }
  .imp { width: 136px; flex: none; background: #ebebeb; color: #343434; }
  .scroll { position: absolute; right: 2px; top: 2px; width: 7px; height: 379px; border-radius: 4px; background: #7f7f7f; }
  .dock { width: 1190px; height: 67px; margin: 4px 0 0 45px; flex: none; border: 1px solid #344051; border-radius: 5px 5px 0 0; background: linear-gradient(90deg, #121a2a, #121f32); display: flex; padding-left: 2.500px; }
  .slot { width: 55.150px; height: 66px; flex: none; display: flex; flex-direction: column; align-items: center; padding-top: 5px; }
  .slot i { width: 4px; height: 4px; border-radius: 50%; background: #9299a5; margin-top: 6px; }
  .line { width: 1px; height: 49px; margin: 7px 0 0 11.500px; background: #4d5867; }
  .thumb { margin: 16px 0 0 16px; }
  .trash { margin: 5px 0 0 11px; }
</style>
